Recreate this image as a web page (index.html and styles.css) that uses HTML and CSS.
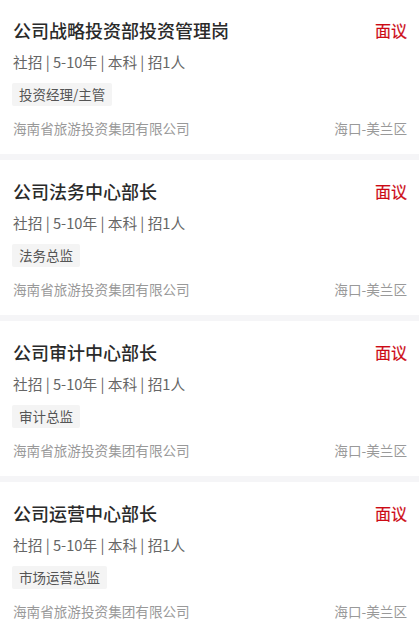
FILE: index.html
```html
<!DOCTYPE html>
<html lang="zh-CN">
<head>
<meta charset="UTF-8">
<title>职位列表</title>
<meta name="viewport" content="width=device-width, initial-scale=1">
<link rel="stylesheet" href="styles.css">
</head>
<body>

<main class="job-list">
  <div class="job-card">
    <div class="job-head">
      <h2 class="job-title">公司战略投资部投资管理岗</h2>
      <span class="job-salary">面议</span>
    </div>
    <p class="job-meta">社招 | 5-10年 | 本科 | 招1人</p>
    <span class="job-tag">投资经理/主管</span>
    <div class="job-foot">
      <span>海南省旅游投资集团有限公司</span>
      <span>海口-美兰区</span>
    </div>
  </div>

  <div class="job-card">
    <div class="job-head">
      <h2 class="job-title">公司法务中心部长</h2>
      <span class="job-salary">面议</span>
    </div>
    <p class="job-meta">社招 | 5-10年 | 本科 | 招1人</p>
    <span class="job-tag">法务总监</span>
    <div class="job-foot">
      <span>海南省旅游投资集团有限公司</span>
      <span>海口-美兰区</span>
    </div>
  </div>

  <div class="job-card">
    <div class="job-head">
      <h2 class="job-title">公司审计中心部长</h2>
      <span class="job-salary">面议</span>
    </div>
    <p class="job-meta">社招 | 5-10年 | 本科 | 招1人</p>
    <span class="job-tag">审计总监</span>
    <div class="job-foot">
      <span>海南省旅游投资集团有限公司</span>
      <span>海口-美兰区</span>
    </div>
  </div>

  <div class="job-card">
    <div class="job-head">
      <h2 class="job-title">公司运营中心部长</h2>
      <span class="job-salary">面议</span>
    </div>
    <p class="job-meta">社招 | 5-10年 | 本科 | 招1人</p>
    <span class="job-tag">市场运营总监</span>
    <div class="job-foot">
      <span>海南省旅游投资集团有限公司</span>
      <span>海口-美兰区</span>
    </div>
  </div>
</main>

</body>
</html>
```

FILE: styles.css
```css
body { margin: 0; background: #f5f5f7; font-family: "Noto Sans CJK SC", "Noto Sans", sans-serif; overflow: hidden; }
.job-list { display: flex; flex-direction: column; gap: 6px; margin-top: -1px; }
.job-card { background: #fff; height: 155px; box-sizing: border-box; padding: 19px 12px 0 13px; display: flex; flex-direction: column; align-items: flex-start; }
.job-head { display: flex; justify-content: space-between; align-items: center; width: 100%; height: 24px; }
.job-title { margin: 0; font-size: 18px; line-height: 24px; font-weight: 500; color: #2a2a2a; }
.job-salary { font-size: 16px; color: #cc0a14; -webkit-text-stroke: 0.2px #cc0a14; }
.job-meta { margin: 10px 0 0; font-size: 14.7px; line-height: 20px; color: #666; }
.job-tag { margin: 11px 0 0 -1px; padding: 0 7px; background: #f4f4f4; color: #555; font-size: 13.5px; line-height: 23px; border-radius: 2px; }
.job-foot { margin-top: 12px; width: 100%; display: flex; justify-content: space-between; font-size: 13.6px; line-height: 20px; color: #999; }
```
